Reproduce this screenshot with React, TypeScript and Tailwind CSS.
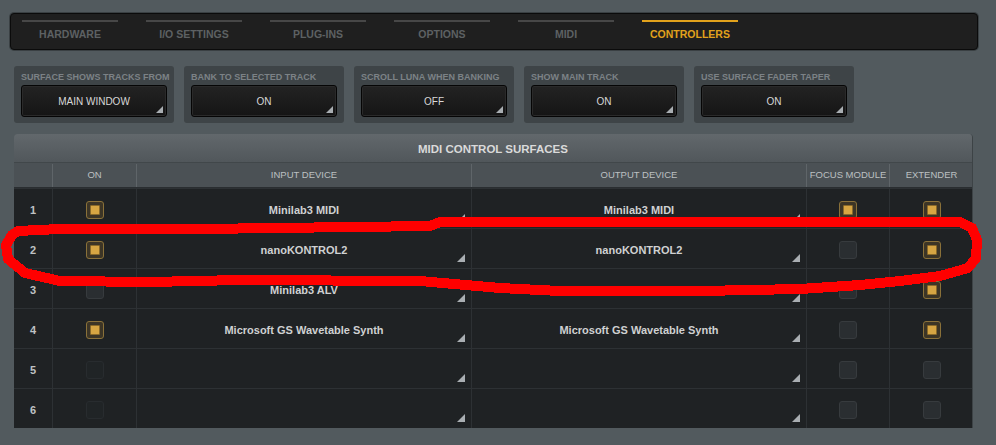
import React from 'react';

const tabs = ['HARDWARE', 'I/O SETTINGS', 'PLUG-INS', 'OPTIONS', 'MIDI', 'CONTROLLERS'];

const settings = [
  { label: 'SURFACE SHOWS TRACKS FROM', value: 'MAIN WINDOW' },
  { label: 'BANK TO SELECTED TRACK', value: 'ON' },
  { label: 'SCROLL LUNA WHEN BANKING', value: 'OFF' },
  { label: 'SHOW MAIN TRACK', value: 'ON' },
  { label: 'USE SURFACE FADER TAPER', value: 'ON' },
];

type Box = 'on' | 'off' | 'dim';

const rows: { n: number; on: Box; input: string; output: string; focus: Box; ext: Box }[] = [
  { n: 1, on: 'on', input: 'Minilab3 MIDI', output: 'Minilab3 MIDI', focus: 'on', ext: 'on' },
  { n: 2, on: 'on', input: 'nanoKONTROL2', output: 'nanoKONTROL2', focus: 'off', ext: 'on' },
  { n: 3, on: 'off', input: 'Minilab3 ALV', output: 'Minilab3 ALV', focus: 'off', ext: 'on' },
  { n: 4, on: 'on', input: 'Microsoft GS Wavetable Synth', output: 'Microsoft GS Wavetable Synth', focus: 'off', ext: 'on' },
  { n: 5, on: 'dim', input: '', output: '', focus: 'off', ext: 'off' },
  { n: 6, on: 'dim', input: '', output: '', focus: 'off', ext: 'off' },
];

const cols = 'grid grid-cols-[39px_84px_335px_335px_83px_83px]';

function Corner({ className }: { className: string }) {
  return (
    <svg width="8" height="8" viewBox="0 0 8 8" className={className}>
      <polygon points="8,0 8,8 0,8" fill="#a9aeb2" />
    </svg>
  );
}

function Check({ state }: { state: Box }) {
  if (state === 'on') {
    return (
      <div className="w-[18px] h-[18px] rounded-[3px] border border-[#8a7139] bg-[#3c3526] p-[3px]">
        <div className="w-full h-full rounded-[1px] bg-[#d7a643] border border-[#8a6a2a]" />
      </div>
    );
  }
  if (state === 'dim') {
    return <div className="w-[18px] h-[18px] rounded-[3px] bg-[#202426] border border-[#282c2f]" />;
  }
  return <div className="w-[18px] h-[18px] rounded-[3px] bg-[#2a2e31] border border-[#373b3e]" />;
}

export default function App() {
  return (
    <div
      className="relative w-[996px] h-[445px] overflow-hidden bg-[#525a5e] pt-[13px]"
      style={{ fontFamily: '"Liberation Sans", Arial, sans-serif' }}
    >
      {/* Tabs */}
      <div className="ml-[10px] w-[968px] h-[37px] rounded-[4px] bg-[#1f1f1f] border border-[#0b0b0b] shadow-[0_0_0_1px_#3a4043] flex gap-[28px] pl-[11px]">
        {tabs.map((t) => {
          const active = t === 'CONTROLLERS';
          return (
            <div key={t} className="w-[96px] flex flex-col items-center">
              <div className={`mt-[6px] h-[2px] w-full ${active ? 'bg-[#e2a21c]' : 'bg-[#474747]'}`} />
              <div
                className={`mt-[6px] text-[10.5px] leading-[12px] font-bold ${
                  active ? 'text-[#e2a21c]' : 'text-[#5d6163]'
                }`}
              >
                {t}
              </div>
            </div>
          );
        })}
      </div>

      {/* Settings */}
      <div className="mt-[16px] ml-[14px] flex gap-[10px]">
        {settings.map((s) => (
          <div key={s.label} className="w-[160px] h-[57px] rounded-[3px] bg-[#3e4447] px-[7px] pt-[5px]">
            <div className="h-[12px] text-[9px] leading-[12px] font-bold text-[#7c8286] whitespace-nowrap">
              {s.label}
            </div>
            <div className="relative mt-[2px] h-[32px] rounded-[3px] border border-[#050505] bg-gradient-to-b from-[#232323] to-[#151515] shadow-[inset_0_0_0_1px_#2a2a2a] flex items-center justify-center">
              <span className="text-[10px] text-[#d8d8d8]">{s.value}</span>
              <Corner className="absolute right-[3px] bottom-[3px] w-[7px] h-[7px]" />
            </div>
          </div>
        ))}
      </div>

      {/* Table */}
      <div className="mt-[11px] ml-[14px] w-[959px] rounded-t-[4px] overflow-hidden border-r border-[#3d4346]">
        <div className="h-[29px] pt-[3px] bg-gradient-to-b from-[#62686c] to-[#51575b] border-b border-[#41474a] flex items-center justify-center">
          <span className="text-[11.5px] font-bold text-[#dadada]">MIDI CONTROL SURFACES</span>
        </div>
        <div className={`${cols} h-[25px] pt-[1px] bg-[#4b5155] border-b border-[#2a2e31] text-[9.5px] text-[#bcc0c2]`}>
          {['', 'ON', 'INPUT DEVICE', 'OUTPUT DEVICE', 'FOCUS MODULE', 'EXTENDER'].map((h, i) => (
            <div
              key={i}
              className={`flex items-center justify-center whitespace-nowrap ${i < 5 ? 'border-r border-[#5f6569]' : ''}`}
            >
              {h}
            </div>
          ))}
        </div>
        {rows.map((r) => (
          <div key={r.n} className={`${cols} h-[40px] bg-[#1f2224] border-t border-[#2d3134]`}>
            <div className="flex items-center justify-center pt-[3px] border-r border-[#2d3134] text-[11px] font-bold text-[#bfc2c4]">
              {r.n}
            </div>
            <div className="flex items-center justify-center pt-[2px] border-r border-[#2d3134]">
              <Check state={r.on} />
            </div>
            {[r.input, r.output].map((d, i) => (
              <div
                key={i}
                className="relative flex items-center justify-center pt-[3px] border-r border-[#2d3134] text-[11px] font-bold text-[#cfd1d2]"
              >
                {d}
                <Corner className="absolute right-[6px] bottom-[6px]" />
              </div>
            ))}
            <div className="flex items-center justify-center pt-[2px] border-r border-[#2d3134]">
              <Check state={r.focus} />
            </div>
            <div className="flex items-center justify-center pt-[2px]">
              <Check state={r.ext} />
            </div>
          </div>
        ))}
      </div>

      {/* Red annotation loop */}
      <svg
        className="absolute left-0 top-0 pointer-events-none"
        width="996"
        height="445"
        viewBox="0 0 996 445"
      >
        <path
          d="M18 231 L60 229 L200 229 L430 226 L440 222 L740 222 L960 222 L972 228 L977 240 L976 258 L968 268 L940 276 L900 281 L860 285 L800 289 L700 291 L560 291 L500 288 L420 281 L240 280 L150 282 L60 281 L25 273 L8 259 L6 245 L12 235 Z"
          fill="none"
          stroke="#ff0000"
          strokeWidth="10"
          strokeLinejoin="round"
          shapeRendering="crispEdges"
        />
      </svg>
    </div>
  );
}
